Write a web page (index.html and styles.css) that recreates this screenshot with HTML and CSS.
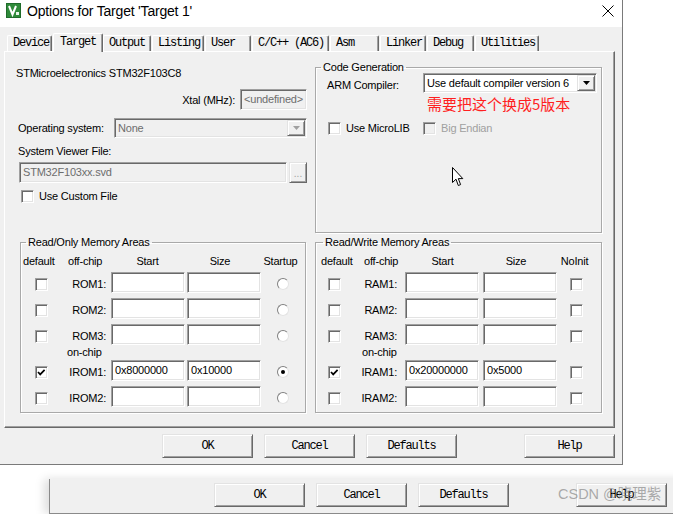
FILE: index.html
```html
<!DOCTYPE html>
<html>
<head>
<meta charset="utf-8">
<title>Options for Target 'Target 1'</title>
<link rel="stylesheet" href="styles.css">
</head>
<body>
<div class="screen">
  <div class="dialog">
    <div class="titlebar">
      <svg class="app-icon" width="15" height="15" viewBox="0 0 15 15">
        <rect x="0" y="0" width="15" height="15" fill="#1f6b2a"/>
        <rect x="1" y="1" width="13" height="13" fill="#2f8a3a"/>
        <polyline points="3,3 6.5,11.5 10,3" fill="none" stroke="#fff" stroke-width="2"/>
        <rect x="10" y="9" width="3" height="3" fill="#e8f5e8"/>
      </svg>
      <span class="title">Options for Target 'Target 1'</span>
      <svg class="close" width="12" height="12" viewBox="0 0 12 12">
        <path d="M0.5 0.5 L11.5 11.5 M11.5 0.5 L0.5 11.5" stroke="#000" stroke-width="1" fill="none"/>
      </svg>
    </div>

    <div class="tabs">
      <div class="tab">Device</div>
      <div class="tab tab-active">Target</div>
      <div class="tab">Output</div>
      <div class="tab">Listing</div>
      <div class="tab">User</div>
      <div class="tab">C/C++ (AC6)</div>
      <div class="tab">Asm</div>
      <div class="tab">Linker</div>
      <div class="tab">Debug</div>
      <div class="tab">Utilities</div>
    </div>

    <div class="panel">
      <div class="top">
        <div class="devcol">
          <div class="devname">STMicroelectronics STM32F103C8</div>
          <div class="xtal-row">
            <span class="xtal-label">Xtal (MHz):</span>
            <div class="sunken field disabled xtal-input">&lt;undefined&gt;</div>
          </div>
          <div class="os-row">
            <span class="os-label">Operating system:</span>
            <div class="sunken select disabled os-select">
              <span class="sel-text">None</span>
              <span class="sel-btn"><svg width="7" height="4" viewBox="0 0 7 4"><path d="M0 0 H7 L3.5 4 Z" fill="#a0a0a0"/></svg></span>
            </div>
          </div>
          <div class="svf-label">System Viewer File:</div>
          <div class="svf-row">
            <div class="sunken field disabled svf-input">STM32F103xx.svd</div>
            <div class="raised browse">...</div>
          </div>
          <div class="custom-row">
            <span class="chk"></span>
            <span>Use Custom File</span>
          </div>
        </div>

        <fieldset class="group codegen">
          <legend>Code Generation</legend>
          <div class="arm-row">
            <span class="arm-label">ARM Compiler:</span>
            <div class="sunken select arm-select">
              <span class="sel-text">Use default compiler version 6</span>
              <span class="sel-btn"><svg width="7" height="4" viewBox="0 0 7 4"><path d="M0 0 H7 L3.5 4 Z" fill="#000"/></svg></span>
            </div>
          </div>
          <div class="note">需要把这个换成5版本</div>
          <div class="cb-row">
            <div class="cb-item cb-first"><span class="chk"></span><span>Use MicroLIB</span></div>
            <div class="cb-item dim"><span class="chk chk-disabled"></span><span>Big Endian</span></div>
          </div>
        </fieldset>
      </div>

      <div class="mem">
        <fieldset class="group memgroup rom">
          <legend>Read/Only Memory Areas</legend>
          <div class="memgrid">
            <div class="h h-default">default</div>
            <div class="h h-off">off-chip</div>
            <div class="h h-start">Start</div>
            <div class="h h-size">Size</div>
            <div class="h h-last">Startup</div>

            <div class="c-chk"><span class="chk"></span></div>
            <div class="c-lbl">ROM1:</div>
            <div class="c-in"><div class="sunken field mem-input"></div></div>
            <div class="c-in"><div class="sunken field mem-input"></div></div>
            <div class="c-last"><span class="radio"></span></div>

            <div class="c-chk"><span class="chk"></span></div>
            <div class="c-lbl">ROM2:</div>
            <div class="c-in"><div class="sunken field mem-input"></div></div>
            <div class="c-in"><div class="sunken field mem-input"></div></div>
            <div class="c-last"><span class="radio"></span></div>

            <div class="c-chk"><span class="chk"></span></div>
            <div class="c-lbl">ROM3:</div>
            <div class="c-in"><div class="sunken field mem-input"></div></div>
            <div class="c-in"><div class="sunken field mem-input"></div></div>
            <div class="c-last"><span class="radio"></span></div>

            <div class="onchip">on-chip</div>

            <div class="c-chk"><span class="chk"><svg width="11" height="11" viewBox="0 0 11 11"><path d="M2 5 L4.2 7.4 L8.6 2.8" fill="none" stroke="#000" stroke-width="1.7"/></svg></span></div>
            <div class="c-lbl">IROM1:</div>
            <div class="c-in"><div class="sunken field mem-input">0x8000000</div></div>
            <div class="c-in"><div class="sunken field mem-input">0x10000</div></div>
            <div class="c-last"><span class="radio radio-on"></span></div>

            <div class="c-chk"><span class="chk"></span></div>
            <div class="c-lbl">IROM2:</div>
            <div class="c-in"><div class="sunken field mem-input"></div></div>
            <div class="c-in"><div class="sunken field mem-input"></div></div>
            <div class="c-last"><span class="radio"></span></div>
          </div>
        </fieldset>

        <fieldset class="group memgroup ram">
          <legend>Read/Write Memory Areas</legend>
          <div class="memgrid">
            <div class="h h-default">default</div>
            <div class="h h-off">off-chip</div>
            <div class="h h-start">Start</div>
            <div class="h h-size">Size</div>
            <div class="h h-last">NoInit</div>

            <div class="c-chk"><span class="chk"></span></div>
            <div class="c-lbl">RAM1:</div>
            <div class="c-in"><div class="sunken field mem-input"></div></div>
            <div class="c-in"><div class="sunken field mem-input"></div></div>
            <div class="c-last"><span class="chk"></span></div>

            <div class="c-chk"><span class="chk"></span></div>
            <div class="c-lbl">RAM2:</div>
            <div class="c-in"><div class="sunken field mem-input"></div></div>
            <div class="c-in"><div class="sunken field mem-input"></div></div>
            <div class="c-last"><span class="chk"></span></div>

            <div class="c-chk"><span class="chk"></span></div>
            <div class="c-lbl">RAM3:</div>
            <div class="c-in"><div class="sunken field mem-input"></div></div>
            <div class="c-in"><div class="sunken field mem-input"></div></div>
            <div class="c-last"><span class="chk"></span></div>

            <div class="onchip">on-chip</div>

            <div class="c-chk"><span class="chk"><svg width="11" height="11" viewBox="0 0 11 11"><path d="M2 5 L4.2 7.4 L8.6 2.8" fill="none" stroke="#000" stroke-width="1.7"/></svg></span></div>
            <div class="c-lbl">IRAM1:</div>
            <div class="c-in"><div class="sunken field mem-input">0x20000000</div></div>
            <div class="c-in"><div class="sunken field mem-input">0x5000</div></div>
            <div class="c-last"><span class="chk"></span></div>

            <div class="c-chk"><span class="chk"></span></div>
            <div class="c-lbl">IRAM2:</div>
            <div class="c-in"><div class="sunken field mem-input"></div></div>
            <div class="c-in"><div class="sunken field mem-input"></div></div>
            <div class="c-last"><span class="chk"></span></div>
          </div>
        </fieldset>
      </div>
    </div>

    <div class="btnrow">
      <div class="raised btn">OK</div>
      <div class="raised btn">Cancel</div>
      <div class="raised btn">Defaults</div>
      <div class="raised btn btn-help">Help</div>
    </div>
  </div>

  <div class="dialog2">
    <div class="raised btn">OK</div>
    <div class="raised btn">Cancel</div>
    <div class="raised btn">Defaults</div>
    <div class="raised btn btn-help">Help</div>
  </div>

  <svg class="cursor" width="13" height="20" viewBox="0 0 13 20">
    <path d="M0.5 0.5 L0.5 15.5 L4 12.2 L6.3 18.5 L8.6 17.6 L6.3 11.6 L10.8 11.6 Z" fill="#fff" stroke="#000" stroke-width="1" stroke-linejoin="miter"/>
  </svg>
  <div class="watermark">CSDN @晓理紫</div>
</div>
</body>
</html>
```

FILE: styles.css
```css
* { box-sizing: border-box; }

html, body {
  margin: 0;
  padding: 0;
}

body {
  background: #fff;
  width: 673px;
  height: 514px;
  overflow: hidden;
  font-family: "Liberation Sans", Arial, sans-serif;
  font-size: 11px;
  letter-spacing: -0.2px;
  color: #000;
}

.screen {
  position: relative;
  width: 673px;
  height: 514px;
  overflow: hidden;
}

/* ---------- main dialog ---------- */
.dialog {
  width: 623px;
  height: 465px;
  background: #f0f0f0;
  border-right: 1px solid #7a7a7a;
  border-bottom: 1px solid #7a7a7a;
}

.titlebar {
  height: 27px;
  background: #fff;
  display: flex;
  align-items: flex-start;
  padding-top: 3px;
}

.app-icon {
  margin-left: 6px;
  flex: none;
}

.title {
  margin-left: 6px;
  font-size: 14px;
  line-height: 16px;
  letter-spacing: -0.2px;
  color: #000;
}

.close {
  margin-left: auto;
  margin-right: 8px;
  margin-top: 2px;
}

/* ---------- tabs ---------- */
.tabs {
  display: grid;
  grid-template-columns: 46px 50px 49px 53px 47px 78px 50px 47px 48px 65px;
  height: 24px;
  padding-left: 7px;
  align-items: end;
  font-family: "Liberation Mono", "DejaVu Sans Mono", monospace;
  font-size: 12px;
  letter-spacing: -1.2px;
}

.tab {
  height: 16px;
  line-height: 15px;
  margin-right: 1px;
  padding-left: 5px;
  background: #f0f0f0;
  border-top: 1px solid #fff;
  border-left: 1px solid #fff;
  border-right: 1px solid #696969;
  box-shadow: inset -1px 0 #a0a0a0;
  border-radius: 2px 2px 0 0;
  white-space: nowrap;
  overflow: hidden;
}

.tab-active {
  position: relative;
  z-index: 2;
  height: 19px;
  margin-bottom: -1px;
  margin-right: 0;
  line-height: 17px;
  padding-left: 6px;
}

/* ---------- tab panel ---------- */
.panel {
  margin-left: 4px;
  width: 611px;
  height: 377px;
  border: 1px solid;
  border-color: #fff #696969 #696969 #fff;
  box-shadow: inset -1px -1px #a0a0a0;
}

.top {
  display: grid;
  grid-template-columns: 310px 287px;
}

.devcol {
  padding-top: 14px;
}

.devname {
  margin-left: 11px;
  line-height: 14px;
}

.xtal-row {
  display: flex;
  justify-content: flex-end;
  align-items: center;
  margin-top: 9px;
  padding-right: 8px;
}

.xtal-label {
  margin-right: 5px;
}

.xtal-input {
  width: 67px;
  height: 21px;
}

.os-row {
  display: flex;
  align-items: center;
  margin-top: 8px;
  padding-left: 13px;
  padding-right: 8px;
}

.os-label {
  width: 96px;
  flex: none;
}

.os-select {
  flex: 1;
  height: 20px;
}

.svf-label {
  margin-top: 6px;
  padding-left: 13px;
  line-height: 14px;
}

.svf-row {
  display: flex;
  gap: 2px;
  margin-top: 4px;
  padding-left: 14px;
  padding-right: 8px;
}

.svf-input {
  flex: 1;
  height: 21px;
}

.browse {
  width: 18px;
  height: 21px;
  display: flex;
  justify-content: center;
  align-items: flex-end;
  padding-bottom: 3px;
  color: #a0a0a0;
  font-size: 10px;
  line-height: 10px;
  letter-spacing: 0;
}

.custom-row {
  display: flex;
  align-items: center;
  gap: 5px;
  margin-top: 6px;
  padding-left: 16px;
  line-height: 14px;
}

/* ---------- 3D controls ---------- */
.sunken {
  background: #fff;
  border: 1px solid;
  border-color: #a0a0a0 #fff #fff #a0a0a0;
  box-shadow: inset 1px 1px #696969, inset -1px -1px #e3e3e3;
}

.raised {
  background: #f0f0f0;
  border: 1px solid;
  border-color: #e3e3e3 #696969 #696969 #e3e3e3;
  box-shadow: inset 1px 1px #fff, inset -1px -1px #a0a0a0;
}

.field {
  padding: 2px 2px 0 3px;
  line-height: 14px;
  white-space: nowrap;
  overflow: hidden;
}

.disabled {
  background: #f0f0f0;
  color: #6d6d6d;
}

.select {
  display: flex;
  align-items: stretch;
}

.sel-text {
  flex: 1;
  padding-left: 3px;
  display: flex;
  align-items: center;
  white-space: nowrap;
  overflow: hidden;
}

.sel-btn {
  width: 18px;
  margin: 1px;
  flex: none;
  display: flex;
  justify-content: center;
  align-items: center;
  background: #f0f0f0;
  border: 1px solid;
  border-color: #e3e3e3 #696969 #696969 #e3e3e3;
  box-shadow: inset 1px 1px #fff, inset -1px -1px #a0a0a0;
}

.chk {
  width: 13px;
  height: 13px;
  flex: none;
  display: inline-flex;
  background: #fff;
  border: 1px solid;
  border-color: #a0a0a0 #fff #fff #a0a0a0;
  box-shadow: inset 1px 1px #696969, inset -1px -1px #e3e3e3;
}

.chk-disabled {
  background: #f0f0f0;
}

.radio {
  width: 12px;
  height: 12px;
  border-radius: 50%;
  display: inline-flex;
  justify-content: center;
  align-items: center;
  background: #fff;
  border: 1px solid;
  border-color: #808080 #e3e3e3 #e3e3e3 #808080;
}

.radio-on::after {
  content: "";
  width: 4px;
  height: 4px;
  border-radius: 50%;
  background: #000;
}

/* ---------- group boxes ---------- */
.group {
  margin: 0;
  min-width: 0;
  border: 1px solid #a9a9a9;
  box-shadow: 1px 1px #fff, inset 1px 1px #fff;
}

.group legend {
  padding: 0 2px;
  line-height: 12px;
}

.codegen {
  margin-top: 9px;
  height: 172px;
  padding: 0 4px 0 5px;
}

.arm-row {
  display: flex;
  align-items: center;
  padding-left: 6px;
}

.arm-label {
  width: 96px;
  flex: none;
  padding-top: 3px;
}

.arm-select {
  width: 174px;
  height: 20px;
}

.note {
  margin-top: 2px;
  padding-left: 106px;
  font-family: "Noto Sans CJK SC", sans-serif;
  font-size: 15px;
  line-height: 17px;
  letter-spacing: 0;
  color: #ff1f1f;
}

.cb-row {
  display: flex;
  margin-top: 9px;
  padding-left: 7px;
  line-height: 14px;
}

.cb-item {
  display: flex;
  align-items: center;
  gap: 5px;
}

.cb-first {
  width: 95px;
}

.dim {
  color: #a0a0a0;
}

/* ---------- memory areas ---------- */
.mem {
  display: grid;
  grid-template-columns: 286px 287px;
  column-gap: 9px;
  padding-left: 15px;
  margin-top: 3px;
}

.memgroup {
  height: 177px;
  padding: 6px 0 0 0;
}

.rom legend { margin-left: 5px; }
.ram legend { margin-left: 7px; }

.memgrid {
  display: grid;
  grid-template-rows: 18px 26px 26px 21px 15px 26px 21px;
}

.rom .memgrid { grid-template-columns: 41px 49px 76px 74px 44px; }
.ram .memgrid { grid-template-columns: 36px 53px 78px 74px 44px; }

.h {
  line-height: 14px;
  white-space: nowrap;
}

.h-default { padding-left: 2px; }
.ram .h-default { padding-left: 5px; }
.h-off { padding-left: 6px; }
.ram .h-off { padding-left: 12px; }
.h-start { text-align: center; padding-right: 3px; }
.h-size { text-align: center; padding-right: 8px; }
.h-last { text-align: center; padding-right: 5px; }
.ram .h-last { padding-right: 9px; }

.c-chk, .c-last {
  height: 21px;
  display: flex;
  justify-content: center;
  align-items: center;
  padding-top: 3px;
}

.ram .c-last { padding-right: 6px; }

.c-lbl {
  height: 21px;
  display: flex;
  justify-content: flex-end;
  align-items: center;
  padding-top: 2px;
  padding-right: 5px;
}

.ram .c-lbl { padding-right: 8px; }

.mem-input {
  width: 74px;
  height: 21px;
}

.onchip {
  grid-column: 2 / -1;
  line-height: 14px;
  padding-left: 5px;
}

.ram .onchip { padding-left: 10px; }

/* ---------- buttons ---------- */
.btnrow {
  display: flex;
  gap: 11px;
  padding: 6px 0 0 162px;
}

.btn {
  width: 91px;
  height: 24px;
  flex: none;
  display: flex;
  justify-content: center;
  align-items: center;
  font-family: "Liberation Mono", "DejaVu Sans Mono", monospace;
  font-size: 12px;
  letter-spacing: -1.2px;
}

.btn-help {
  margin-left: 56px;
}

/* ---------- second (background) window ---------- */
.dialog2 {
  margin: 14px 0 0 49px;
  width: 640px;
  height: 35px;
  background: #f0f0f0;
  border-left: 1px solid #8a8a8a;
  border-bottom: 1px solid #8a8a8a;
  box-shadow: -5px 0 9px rgba(0, 0, 0, 0.13);
  display: flex;
  gap: 11px;
  padding: 4px 0 0 164px;
}

/* ---------- overlays ---------- */
.cursor {
  position: absolute;
  left: 452px;
  top: 167px;
}

.watermark {
  position: absolute;
  left: 558px;
  top: 486px;
  font-family: "Liberation Sans", "Noto Sans CJK SC", sans-serif;
  font-size: 14.5px;
  line-height: 17px;
  letter-spacing: 0;
  color: rgba(120, 120, 120, 0.6);
  white-space: nowrap;
}
```
